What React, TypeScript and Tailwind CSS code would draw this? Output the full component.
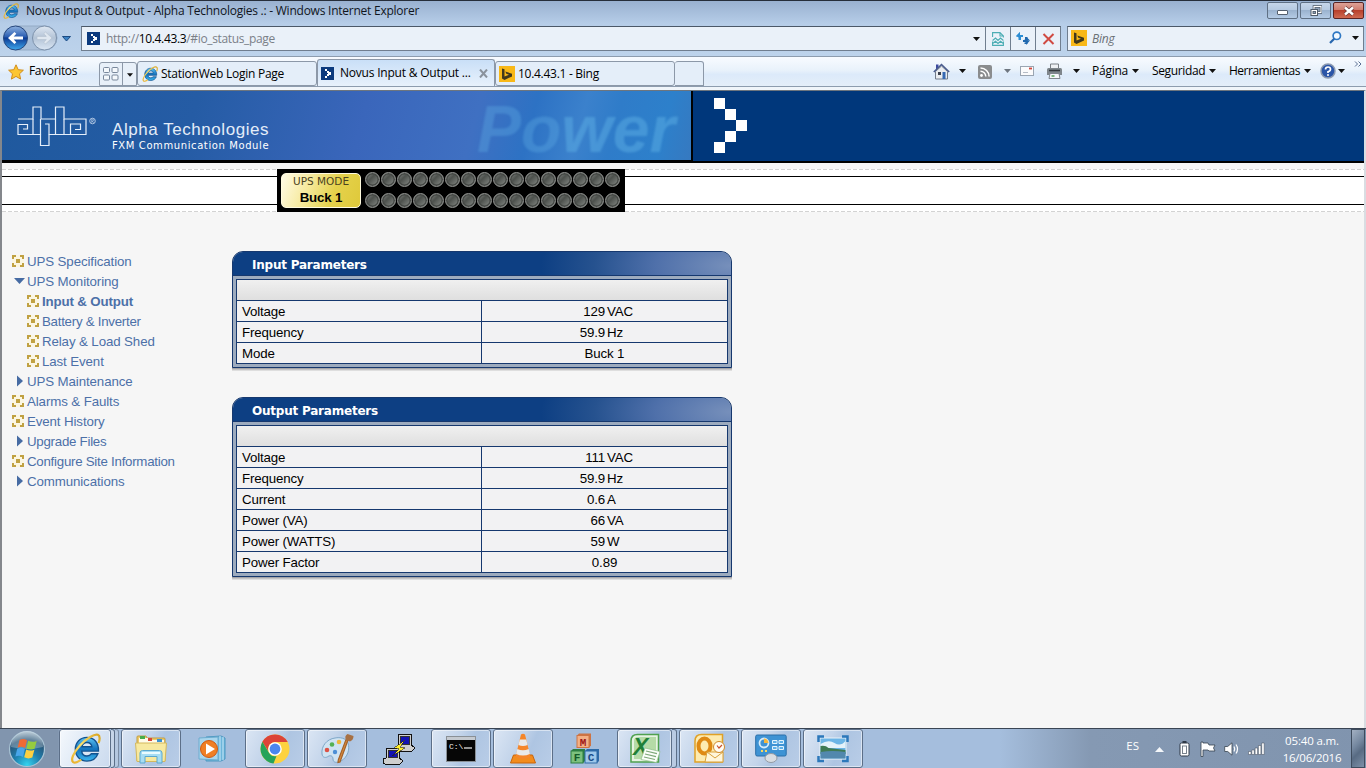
import type { ReactNode } from 'react';

const UI = "font-['Open_Sans','Noto_Sans',sans-serif]";

/* ---------- icons ---------- */

function IeIcon({ size }: { size: number }) {
  return (
    <svg width={size} height={size} viewBox="0 0 32 32" className="shrink-0">
      <defs>
        <linearGradient id="ieBlue" x1="0" y1="0" x2="0" y2="1">
          <stop offset="0" stopColor="#5ec4f4" />
          <stop offset="0.5" stopColor="#1473bd" />
          <stop offset="1" stopColor="#3cb5ee" />
        </linearGradient>
        <linearGradient id="ieGold" x1="1" y1="0" x2="0" y2="1">
          <stop offset="0" stopColor="#d9a520" />
          <stop offset="0.5" stopColor="#fbdf6e" />
          <stop offset="1" stopColor="#e8b02a" />
        </linearGradient>
      </defs>
      <path
        d="M17.5 4.5C10.5 4.5 5.5 9.8 5.5 16.8S10.5 29 17.5 29c5.4 0 9.6-3 11.3-7.6h-6.7c-1 1.5-2.6 2.3-4.6 2.3-3 0-5.2-2-5.4-5h17.3C29.9 10.500 25 4.500 17.500 4.500zM12.300 14.200c.5-2.600 2.500-4.400 5.200-4.400s4.700 1.800 5.100 4.400z"
        fill="url(#ieBlue)"
        stroke="#12528f"
        strokeWidth="1.4"
      />
      <path
        d="M29.500 10.500c1.600-4.600 1.300-7.700-.8-8.600C25.600.6 17 5.400 10 13.200 3.200 20.800.6 28 3.300 30c1.700 1.200 4.900 0 8.300-2.500"
        fill="none"
        stroke="url(#ieGold)"
        strokeWidth="2.300"
      />
    </svg>
  );
}

function NovusIcon() {
  return (
    <svg width="13" height="13" viewBox="0 0 13 13" className="shrink-0" shapeRendering="crispEdges">
      <rect width="13" height="13" fill="#0b3a7e" />
      <path d="M4 2h2v2H4zM6 4h2v2H6zM7 5h3v3H7zM6 7h2v2H6zM4 9h2v2H4z" fill="#fff" />
    </svg>
  );
}

function BingIcon({ className }: { className?: string }) {
  return (
    <svg width="16" height="16" viewBox="0 0 16 16" className={`shrink-0 ${className ?? ''}`}>
      <rect width="16" height="16" fill="#f8b818" />
      <path d="M3 2.500l2.500.8v7.200l4.500-1.800-2.700-1L6.300 5.500l6.700 2.300v2.600L5.500 14 3 12.500z" fill="#41391d" />
    </svg>
  );
}

function Caret({ color = '#111', className = '' }: { color?: string; className?: string }) {
  return (
    <svg width="7" height="4" viewBox="0 0 7 4" className={`shrink-0 ${className}`}>
      <path d="M0 0h7L3.500 4z" fill={color} />
    </svg>
  );
}

function NavNode() {
  return (
    <svg width="12" height="12" viewBox="0 0 12 12" className="shrink-0" shapeRendering="crispEdges">
      <rect width="12" height="12" fill="#fbf6e2" />
      <path
        d="M0 0h4v2H2v2H0zM8 0h4v4h-2V2H8zM0 8h2v2h2v2H0zM10 8h2v4H8v-2h2zM4 4h4v4H4z"
        fill="#c0a142"
      />
    </svg>
  );
}

/* ---------- browser chrome ---------- */

function TitleBar() {
  return (
    <div className="flex h-[26px] items-start border-t border-[#262e3a]">
      <div className="ml-[3px] mt-[2px]">
        <IeIcon size={16} />
      </div>
      <span className="ml-[7px] mt-[1px] text-[12px] leading-[18px] tracking-[-0.240px] text-[#10151c]">
        Novus Input &amp; Output - Alpha Technologies .: - Windows Internet Explorer
      </span>
      <div className="ml-auto mr-[2px] mt-[1px] flex gap-[2px]">
        <div className="flex h-[17px] w-[31px] items-center justify-center rounded-[2px] border border-[#5f7084] bg-[linear-gradient(#c6d6e9_0%,#b5c9e0_48%,#9bb3cf_50%,#b4cbe5_100%)]">
          <span className="mt-[3px] h-[5px] w-[11px] rounded-[1px] border border-[#55606e] bg-white" />
        </div>
        <div className="flex h-[17px] w-[31px] items-center justify-center rounded-[2px] border border-[#5f7084] bg-[linear-gradient(#c6d6e9_0%,#b5c9e0_48%,#9bb3cf_50%,#b4cbe5_100%)]">
          <svg width="13" height="12" viewBox="0 0 13 12" className="shrink-0">
            <rect x="5" y="1.500" width="7" height="6" fill="#8fa3bb" stroke="#4f5b69" strokeWidth="2.600" />
            <rect x="5" y="1.500" width="7" height="6" fill="none" stroke="#fff" strokeWidth="1.100" />
            <rect x="2" y="4.500" width="6.500" height="6" fill="#fff" stroke="#4f5b69" strokeWidth="1" />
            <rect x="4" y="6.500" width="2.500" height="2" fill="#8fa3bb" stroke="#4f5b69" strokeWidth="0.900" />
          </svg>
        </div>
        <div className="flex h-[17px] w-[31px] items-center justify-center rounded-[2px] border border-[#5b2424] bg-[linear-gradient(#dda297_0%,#cf7b6d_48%,#b8402c_50%,#cf6a52_100%)]">
          <svg width="12" height="10" viewBox="0 0 12 10">
            <path d="M2 1.500l8 7M10 1.500l-8 7" stroke="#6b3b3b" strokeWidth="4" />
            <path d="M2 1.500l8 7M10 1.500l-8 7" stroke="#fff" strokeWidth="2.400" />
          </svg>
        </div>
      </div>
    </div>
  );
}

function BackForward() {
  return (
    <svg width="74" height="28" viewBox="0 0 74 28" className="shrink-0">
      <defs>
        <linearGradient id="back" x1="0" y1="0" x2="0" y2="1">
          <stop offset="0" stopColor="#8fb2e0" />
          <stop offset="0.45" stopColor="#2a5db2" />
          <stop offset="0.5" stopColor="#0c3a94" />
          <stop offset="1" stopColor="#3fa9ee" />
        </linearGradient>
        <linearGradient id="fwd" x1="0" y1="0" x2="0" y2="1">
          <stop offset="0" stopColor="#dfe8f3" />
          <stop offset="0.5" stopColor="#b3c3d6" />
          <stop offset="1" stopColor="#dbe7f4" />
        </linearGradient>
      </defs>
      <path d="M15 2h30a12 12 0 0 1 0 24H15z" fill="#a9bfd9" stroke="#94abc6" />
      <circle cx="15.500" cy="14" r="12" fill="url(#back)" stroke="#27477c" />
      <path d="M8 14l6.500-6 1.800 1.800-2.600 2.600h9.300v3.200h-9.300l2.600 2.600-1.800 1.800z" fill="#fff" />
      <circle cx="44.500" cy="14" r="12" fill="url(#fwd)" stroke="#7c91ab" />
      <path d="M52 14l-6.500-6-1.800 1.800 2.600 2.600H37v3.200h9.300l-2.600 2.600 1.800 1.800z" fill="#dfe7f0" stroke="#b4c1d0" strokeWidth="0.700" />
      <path d="M62.500 12.500h8l-4 4.500z" fill="#3b82c4" stroke="#1c4b83" strokeWidth="1" />
    </svg>
  );
}

function AddressRow() {
  return (
    <div className="flex h-[30px] items-start">
      <div className="-mt-[2px]">
        <BackForward />
      </div>
      <div className="ml-[7px] flex h-[25px] w-[980px] border border-[#707e8f] border-t-[#4b5868] bg-[#eaf1f9]">
        <div className="ml-[5px] mt-[5px]">
          <NovusIcon />
        </div>
        <span className="ml-[6px] mt-[3px] text-[12px] leading-[18px] tracking-[-0.350px] text-[#7a8088]">
          http://<span className="text-black">10.4.43.3</span>/#io_status_page
        </span>
        <Caret className="ml-auto mr-[5px] mt-[10px]" />
        <div className="flex w-[25px] items-center justify-center border-l border-[#707e8f]">
          <svg width="12" height="14" viewBox="0 0 12 14" fill="none" stroke="#4badb4" strokeWidth="1.100">
            <path d="M.6 5V.6h7.400l3.400 3.400v1.500M.6 9.500v3.900h10.800V9.500M8 .6V4h3.400" />
            <path d="M.6 8.500L3.500 6l2.500 2.500L8.500 6l2.900 2.500M.6 11.500L3.500 9.300 6 11.500l2.500-2.200 2.900 2.200" />
          </svg>
        </div>
        <div className="flex w-[25px] items-center justify-center border-l border-[#707e8f]">
          <svg width="14" height="14" viewBox="0 0 14 14">
            <path d="M4 0v3h2.500v2H5v3H3V5.500L0 4z" fill="#2c8dd3" />
            <path d="M4 0L0 4.500h2.500V8H5V5h2V3H4z" fill="#2c8dd3" />
            <path d="M10 14l4-4.500h-2.500V6H9v3H7v2h3z" transform="translate(0 -1)" fill="#2068ae" />
            <path d="M8 8.500L10.500 5l3.500 3.500h-2.500V12H8.500v-1.500H9.500v-2z" fill="#2068ae" />
          </svg>
        </div>
        <div className="flex w-[25px] items-center justify-center border-l border-[#707e8f]">
          <svg width="13" height="12" viewBox="0 0 13 12">
            <path d="M1.500 1l10 10M11.500 1l-10 10" stroke="#d04a42" strokeWidth="2" />
          </svg>
        </div>
      </div>
      <div className="ml-[6px] flex h-[25px] w-[297px] border border-[#707e8f] border-t-[#4b5868] bg-[#eaf1f9]">
        <BingIcon className="ml-[3px] mt-[3px]" />
        <span className="ml-[5px] mt-[3px] text-[12px] italic leading-[18px] tracking-[-0.2px] text-[#6a7076]">Bing</span>
        <svg width="13" height="13" viewBox="0 0 13 13" className="ml-auto mr-[10px] mt-[4px]">
          <circle cx="7.800" cy="4.800" r="3.700" fill="#f3f9ff" stroke="#2f78c4" strokeWidth="1.700" />
          <path d="M5.200 7.800L1 12" stroke="#2766ae" strokeWidth="2.200" />
        </svg>
        <Caret className="mr-[4px] mt-[9px]" />
      </div>
    </div>
  );
}

function CommandBar() {
  return (
    <div className="flex h-[30px] items-start border-t border-[#8d9cae] bg-[linear-gradient(#f8fbff_0%,#e9f2fb_45%,#dceafa_60%,#e4eef9_100%)]">
      <svg width="16" height="16" viewBox="0 0 16 16" className="ml-[8px] mt-[7px] shrink-0">
        <path d="M8 .8l2.200 4.900 5.200.5-3.900 3.600 1.100 5.300L8 12.400l-4.600 2.700 1.100-5.300L.6 6.200l5.200-.5z" fill="#fcc633" stroke="#d18d1c" strokeWidth="1" />
      </svg>
      <span className="ml-[5px] mt-[5px] w-[70px] text-[12px] leading-[18px] tracking-[-0.350px]">Favoritos</span>
      <div className="mt-[5px] flex h-[24px] w-[38px] rounded-t-[3px] border border-[#8c98a8] bg-[#e8f0f9]">
        <div className="flex w-[23px] items-center justify-center border-r border-[#8c98a8]">
          <svg width="16" height="14" viewBox="0 0 16 14" fill="#f4f8fc" stroke="#78879b">
            <rect x=".5" y=".5" width="6" height="5" rx="1" />
            <rect x="9" y=".5" width="6" height="5" rx="1" />
            <rect x=".5" y="8" width="6" height="5" rx="1" />
            <rect x="9" y="8" width="6" height="5" rx="1" />
          </svg>
        </div>
        <Caret className="ml-[4px] mt-[10px] w-[6px]" />
      </div>
      <div className="mt-[4px] flex h-[25px] w-[180px] items-start rounded-[3px] border border-[#8c98a8] bg-[#e4eef9]">
        <div className="ml-[4px] mt-[4px]">
          <IeIcon size={16} />
        </div>
        <span className="ml-[3px] mt-[3px] text-[12px] leading-[18px] tracking-[-0.250px]">StationWeb Login Page</span>
      </div>
      <div className="mt-[2px] flex h-[28px] w-[178px] items-start rounded-t-[3px] border border-b-0 border-[#8c98a8] bg-[linear-gradient(#c9dff7,#e9f2fc)]">
        <div className="ml-[3px] mt-[7px]">
          <NovusIcon />
        </div>
        <span className="ml-[6px] mt-[4px] text-[12px] leading-[18px] tracking-[-0.210px]">Novus Input &amp; Output ...</span>
        <svg width="9" height="9" viewBox="0 0 9 9" className="ml-auto mr-[6px] mt-[9px]">
          <path d="M1 .5l7 8M8 .5l-7 8" stroke="#8a929c" strokeWidth="2" />
        </svg>
      </div>
      <div className="mt-[4px] flex h-[25px] w-[180px] items-start rounded-[3px] border border-[#8c98a8] bg-[#e4eef9]">
        <BingIcon className="ml-[3px] mt-[4px]" />
        <span className="ml-[3px] mt-[3px] text-[12px] leading-[18px] tracking-[-0.280px]">10.4.43.1 - Bing</span>
      </div>
      <div className="mt-[4px] h-[25px] w-[29px] rounded-t-[3px] border border-l-0 border-[#8c98a8] bg-[#e4eef9]" />
      <div className="ml-auto flex items-start text-[12px] leading-[18px]">
        <svg width="17" height="17" viewBox="0 0 17 17" className="mt-[6px]">
          <path d="M3 1.500h2.500V5L3 7z" fill="#3d4aa0" />
          <path d="M2.500 8.500L8.500 3l6 5.500V16h-12z" fill="#e9ecf0" stroke="#707b8a" />
          <path d="M.8 9L8.500 1.500 16.200 9" fill="none" stroke="#4a5c8e" strokeWidth="1.600" />
          <rect x="5" y="9" width="3" height="3" fill="#3a3f4c" />
          <rect x="9.500" y="9" width="3" height="7" fill="#3568b2" />
        </svg>
        <Caret className="ml-[9px] mt-[12px]" />
        <svg width="14" height="14" viewBox="0 0 14 14" className="ml-[12px] mt-[8px]">
          <rect width="14" height="14" rx="2" fill="#8a8c8e" />
          <circle cx="3.500" cy="10.500" r="1.400" fill="#fff" />
          <path d="M2.500 6.200a5.300 5.300 0 0 1 5.300 5.300M2.500 3a8.600 8.600 0 0 1 8.600 8.600" fill="none" stroke="#fff" strokeWidth="1.500" />
        </svg>
        <Caret color="#6e7680" className="ml-[12px] mt-[12px]" />
        <svg width="14" height="10" viewBox="0 0 14 10" className="ml-[9px] mt-[9px]">
          <rect x=".5" y=".5" width="13" height="9" fill="#fbfbfc" stroke="#9aa5b2" />
          <path d="M9 2.500h3" stroke="#d2473c" strokeWidth="1.800" />
          <path d="M3 6.500h5" stroke="#b5bcc6" />
        </svg>
        <svg width="17" height="16" viewBox="0 0 17 16" className="ml-[12px] mt-[6px]">
          <path d="M4.500 1h8v5h-8z" fill="#eef1f4" stroke="#7a8086" />
          <path d="M1 6.500q0-1.500 1.500-1.500h12q1.500 0 1.500 1.500V12H1z" fill="#7e858b" />
          <path d="M3 7.500h11" stroke="#33383c" strokeWidth="1.500" />
          <path d="M4 10.500h9l1 5H3z" fill="#f6f8fa" stroke="#7f868d" />
          <path d="M5.500 13h3" stroke="#57a35b" strokeWidth="1.500" />
        </svg>
        <Caret className="ml-[10px] mt-[12px]" />
        <span className="ml-[12px] mt-[5px] w-[36px] tracking-[-0.250px]">Página</span>
        <Caret className="ml-[4px] mt-[12px]" />
        <span className="ml-[13px] mt-[5px] w-[53px] tracking-[-0.350px]">Seguridad</span>
        <Caret className="ml-[4px] mt-[12px]" />
        <span className="ml-[13px] mt-[5px] w-[71px] tracking-[-0.500px]">Herramientas</span>
        <Caret className="ml-[4px] mt-[12px]" />
        <svg width="16" height="16" viewBox="0 0 16 16" className="ml-[9px] mt-[6px]">
          <circle cx="8" cy="8" r="7" fill="#2a55a8" stroke="#8b99b0" strokeWidth="1.500" />
          <path d="M5.500 6.500Q5.500 4 8 4t2.500 2.200Q10.500 8 8 8.700V10" fill="none" stroke="#fff" strokeWidth="1.700" />
          <circle cx="8" cy="12" r="1" fill="#fff" />
        </svg>
        <Caret className="ml-[2px] mt-[12px]" />
        <svg width="8" height="6" viewBox="0 0 8 6" className="ml-[9px] mr-[4px] mt-[4px]">
          <path d="M1 .5L3.500 3 1 5.500M4.500 .5L7 3 4.500 5.500" fill="none" stroke="#5a6e92" />
        </svg>
      </div>
    </div>
  );
}

/* ---------- page ---------- */

function Banner() {
  return (
    <div className="flex h-[72px] shrink-0 border-b-2 border-black bg-[#00377b]">
      <div className="relative h-[72px] w-[691px] border-b-[3px] border-r-2 border-black bg-[linear-gradient(105deg,#1f599e_0%,#255ca5_28%,#3a66bb_52%,#3f70c2_68%,#2d72c4_76%,#3b81cc_83%,#2f7cc9_88%,#2d80cb_95%,#3679c0_100%)]">
        <span className="absolute left-[475px] top-[8px] font-['Liberation_Sans',Arial,sans-serif] text-[66px] font-bold italic leading-[60px] text-[#62aee4]/35 blur-[0.800px]">
          Po<span className="text-[#62b4e6]/45">wer</span>
        </span>
        <div className="flex pl-[15px]">
          <svg width="80" height="44" viewBox="0 0 80 44" className="mt-[14px]" fill="none" stroke="#e6effa" strokeWidth="1.200">
            <path d="M1 14h15V2h8v12h14.500V2h8.500v12h22v15.500H32v11h-8.500v-11H1v-10h9.500v4.500H6" />
            <path d="M16 14v15.500M23.500 14v15.500M32 29.500V19h-4M38.500 14v15.500M47 14v15.500M53.500 29.500V19h10v5.500H58" />
            <circle cx="75.500" cy="16" r="2.800" strokeWidth="0.700" />
            <path d="M74.700 17.700v-3.300h1q1 0 1 .9t-1 .8h-.8l1.800 1.600" strokeWidth="0.500" />
          </svg>
          <div className="ml-[15px] mt-[29px] flex flex-col">
            <span className="font-['Liberation_Sans',Arial,sans-serif] text-[17px] leading-[19px] tracking-[0.550px] text-[#e4edf9]">
              Alpha Technologies
            </span>
            <span className="font-['DejaVu_Sans',Verdana,sans-serif] text-[10px] leading-[14px] tracking-[0.600px] text-white">
              FXM Communication Module
            </span>
          </div>
        </div>
      </div>
      <svg width="33" height="55" viewBox="0 0 33 55" className="ml-[21px] mt-[7px]" shapeRendering="crispEdges">
        <path d="M0 0h11v11H0zM11 11h11v11H11zM22 22h11v11H22zM11 33h11v11H11zM0 44h11v11H0z" fill="#fff" />
      </svg>
    </div>
  );
}

function Led() {
  return (
    <span className="block size-[15px] rounded-full border border-[#949693] bg-[linear-gradient(135deg,#8b8e8b_0%,#4c504c_40%,#5d615d_55%,#8b8f8b_100%)] shadow-[inset_0_0_0_1.500px_#454845]" />
  );
}

const leds = Array.from({ length: 16 }, (_, i) => i);

const dashes = 'h-px bg-[repeating-linear-gradient(90deg,#d3d3d3_0px,#d3d3d3_4px,transparent_4px,transparent_6px)]';

function StatusStrip() {
  return (
    <div className="mt-[6px] flex h-[43px] shrink-0">
      <StripLines className="w-[275px]" />
      <div className="flex w-[348px] bg-black pl-[4px] pt-[4px]">
        <div className="flex h-[35px] w-[80px] flex-col items-center rounded-[5px] border border-[#fffbe0] bg-[linear-gradient(110deg,#fffbe6_0%,#f6e99a_35%,#e5d24c_65%,#dfc93a_100%)]">
          <span className="mt-[1px] font-['DejaVu_Sans',Verdana,sans-serif] text-[10.500px] leading-[13px] text-[#4a4320]">
            UPS MODE
          </span>
          <span className="mt-[2px] font-['Liberation_Sans',Arial,sans-serif] text-[13.300px] font-bold leading-[16px] tracking-[-0.150px] text-black">
            Buck 1
          </span>
        </div>
        <div className="ml-[4px] -mt-px flex flex-col gap-[6px]">
          <div className="flex gap-px">{leds.map((i) => <Led key={i} />)}</div>
          <div className="flex gap-px">{leds.map((i) => <Led key={i} />)}</div>
        </div>
      </div>
      <StripLines className="flex-1" />
    </div>
  );
}

function StripLines({ className }: { className: string }) {
  return (
    <div className={`flex flex-col bg-white ${className}`}>
      <div className={dashes} />
      <div className="mt-[6px] h-[29px] border-y border-black" />
      <div className={`mt-[6px] ${dashes}`} />
    </div>
  );
}

type NavKind = 'node' | 'open' | 'closed';
const nav: { label: string; kind: NavKind; sub?: boolean; active?: boolean; tight?: boolean }[] = [
  { label: 'UPS Specification', kind: 'node' },
  { label: 'UPS Monitoring', kind: 'open' },
  { label: 'Input & Output', kind: 'node', sub: true, active: true },
  { label: 'Battery & Inverter', kind: 'node', sub: true, tight: true },
  { label: 'Relay & Load Shed', kind: 'node', sub: true },
  { label: 'Last Event', kind: 'node', sub: true },
  { label: 'UPS Maintenance', kind: 'closed' },
  { label: 'Alarms & Faults', kind: 'node' },
  { label: 'Event History', kind: 'node' },
  { label: 'Upgrade Files', kind: 'closed', tight: true },
  { label: 'Configure Site Information', kind: 'node', tight: true },
  { label: 'Communications', kind: 'closed' },
];

function NavMarker({ kind }: { kind: NavKind }) {
  if (kind === 'node') return <NavNode />;
  return (
    <svg width="12" height="12" viewBox="0 0 12 12" className="shrink-0 overflow-visible">
      <path d={kind === 'open' ? 'M2 3h11L7.500 9z' : 'M5 .500l6 5.500-6 5.500z'} fill="#466ba3" />
    </svg>
  );
}

function navTracking(n: (typeof nav)[number]) {
  if (n.active) return 'font-bold tracking-[-0.150px]';
  return n.tight ? 'tracking-[-0.260px]' : 'tracking-[-0.110px]';
}

function Sidebar() {
  return (
    <div className="flex w-[220px] flex-col">
      {nav.map((n) => (
        <div key={n.label} className={`flex h-5 items-center ${n.sub ? 'pl-[15px]' : ''}`}>
          <NavMarker kind={n.kind} />
          <span className={`ml-[3px] h-5 text-[13.300px] leading-[21px] text-[#4c70a8] ${navTracking(n)}`}>{n.label}</span>
        </div>
      ))}
    </div>
  );
}

type Row = [label: string, value: string, unit?: string];

function Panel({ title, rows }: { title: string; rows: Row[] }) {
  return (
    <section className="w-[500px] overflow-hidden rounded-t-[11px] border border-[#16386e] bg-[#9dabbe] shadow-[0_1px_0_#a5a5a8,0_2px_0_#c4c4c6,0_3px_0_#dedede]">
      <h2 className="h-[24px] border-b border-[#16386e] bg-[radial-gradient(ellipse_190px_75px_at_100%_60%,#7790bb_0%,#4f70aa_40%,#26528f_72%,#0d3f83_100%)] pl-[19px] font-['DejaVu_Sans',Verdana,sans-serif] text-[12px] font-bold leading-[26px] tracking-[-0.220px] text-white">
        {title}
      </h2>
      <div className="m-[3px] border border-b-0 border-[#16386e] bg-[#f2f2f3]">
        <div className="h-[21px] border-b border-[#16386e] bg-[linear-gradient(#f0f0f0,#dfdfdf)]" />
        {rows.map(([label, value, unit]) => (
          <div
            key={label}
            className="flex h-[21px] border-b border-[#16386e] text-[13.300px] leading-[21px] tracking-[-0.150px] text-black"
          >
            <span className="w-[245px] border-r border-[#16386e] pl-[5px]">{label}</span>
            {unit ? (
              <span className="flex flex-1">
                <span className="w-[123px] text-right">{value}</span>
                <span className="pl-[2px]">{unit}</span>
              </span>
            ) : (
              <span className="flex-1 text-center">{value}</span>
            )}
          </div>
        ))}
      </div>
    </section>
  );
}

/* ---------- taskbar ---------- */

function TaskButton({ children, className = '' }: { children: ReactNode; className?: string }) {
  return (
    <div
      className={`flex h-[39px] shrink-0 items-center justify-center rounded-[3px] border border-[#5c6f88] bg-[linear-gradient(115deg,#dbe6f4_0%,#c3d4ea_40%,#aec5e2_60%,#b9cde7_100%)] shadow-[inset_0_0_0_1px_rgba(255,255,255,0.500)] ${className}`}
    >
      {children}
    </div>
  );
}

function StartOrb() {
  return (
    <svg width="38" height="38" viewBox="0 0 38 38" className="ml-[8px] mt-px shrink-0">
      <defs>
        <radialGradient id="orb" cx="0.5" cy="0.95" r="0.95">
          <stop offset="0" stopColor="#35d3ee" />
          <stop offset="0.4" stopColor="#1e7fae" />
          <stop offset="0.75" stopColor="#2a5577" />
          <stop offset="1" stopColor="#a5bccb" />
        </radialGradient>
      </defs>
      <circle cx="19" cy="19" r="17.500" fill="url(#orb)" stroke="#a9c3d4" strokeWidth="1.200" />
      <path d="M3 17a16 16 0 0 1 32 0q-16 4-32 0z" fill="#fff" opacity="0.270" />
      <path d="M11.500 10q4-2 7.500.3l-1.900 7.700q-4-2.200-7.500-.3z" fill="#ef6a35" />
      <path d="M20.200 10.800q3.800 2 8.500.2l-2.100 7.700q-3.800 1.700-8.200-.3z" fill="#95cb3f" />
      <path d="M9.200 18.700q4-2 7.700.3l-2 7.900q-3.700-2.200-7.500-.3z" fill="#49a6ea" />
      <path d="M18.200 19.500q3.800 2 8.200.2l-2.100 7.900q-4 1.700-8.100-.3z" fill="#fcd042" />
    </svg>
  );
}

function ExplorerIcon() {
  return (
    <svg width="34" height="32" viewBox="0 0 34 32">
      <path d="M3 4q0-1 1-1h8l1 2h17q1 0 1 1v22H3z" fill="#eccb6a" stroke="#c19d42" />
      <path d="M5 5h9l2 2h14v3H5z" fill="#fffbe8" />
      <rect x="6" y="3" width="5" height="3" fill="#47ad4b" />
      <rect x="14" y="5" width="4" height="3" fill="#d74837" />
      <rect x="23" y="6" width="5" height="3" fill="#3c92d1" />
      <path d="M1.500 10h31l-1.500 18.500H3z" fill="#f7e9a0" stroke="#d4b95e" />
      <path d="M6 20q0-2.500 2.500-2.500h17q2.500 0 2.500 2.500v10h-5v-6.500H11V30H6z" fill="#a6ddf3" stroke="#5ba8cf" />
      <path d="M8 20h18" stroke="#e9fbff" strokeWidth="2" />
    </svg>
  );
}

function MediaIcon() {
  return (
    <svg width="30" height="28" viewBox="0 0 30 28">
      <path d="M8 2l15-1 4 2v21l-4 2H8z" fill="#6cb5da" stroke="#4d98c1" />
      <path d="M22 1v25M25 2v23" stroke="#cbeafa" />
      <path d="M1 3l19-1v23L1 24z" fill="#a9d6ed" stroke="#6caccf" />
      <circle cx="11" cy="14" r="8.500" fill="#ef7f25" stroke="#cf5a12" />
      <path d="M8 8.500v11l9-5.500z" fill="#fff" />
    </svg>
  );
}

function ChromeIcon() {
  return (
    <svg width="30" height="30" viewBox="0 0 30 30">
      <circle cx="15" cy="15" r="14.500" fill="#fdd23f" />
      <path d="M2.400 7.800A14.500 14.500 0 0 1 27.700 8H15a7 7 0 0 0-6.200 10z" fill="#dc4438" />
      <path d="M2.400 7.800L9 18.700A7 7 0 0 0 16.500 22L13.500 29.400A14.500 14.500 0 0 1 2.400 7.800z" fill="#25a35a" />
      <circle cx="15" cy="15" r="6.800" fill="#fff" />
      <circle cx="15" cy="15" r="5.400" fill="#4a86ee" />
    </svg>
  );
}

function PaintIcon() {
  return (
    <svg width="34" height="32" viewBox="0 0 34 32">
      <path d="M15 5C7 6 1 13 2 21c.5 4 4 4 6 2.500 2.500-1.700 5-.5 5 2.500 0 4 4 4 8 2C28 24 30 16 28 10c-2-5-8-6-13-5z" fill="#cfe3f2" stroke="#7ea7c8" />
      <circle cx="7" cy="17" r="2.300" fill="#dc5246" />
      <circle cx="12" cy="11.500" r="2.300" fill="#54b153" />
      <circle cx="19" cy="9" r="2.300" fill="#f0b83b" />
      <circle cx="15" cy="19" r="2.200" fill="#4c8fd6" />
      <path d="M28 7l-8 22-2 .5.300-2.500 7.500-20z" fill="#d98d3e" stroke="#a3622a" strokeWidth="1.200" />
      <path d="M26 7q-2-4 1.500-6l6 2q0 4-3.500 5.500z" fill="#a77145" />
    </svg>
  );
}

function PuttyIcon() {
  return (
    <svg width="32" height="32" viewBox="0 0 32 32" shapeRendering="crispEdges">
      <path d="M15 1h13v11l3 2v2l-2 2H15l-2-2v-3h2z" fill="#cfcfcf" stroke="#111" />
      <path d="M17 3h9v8h-9z" fill="#1212b4" stroke="#333" />
      <path d="M3 15h13v10l3 2v2l-2 2H2l-2-1v-4l3-1z" fill="#cfcfcf" stroke="#111" />
      <path d="M5 17h9v7H5z" fill="#1212b4" stroke="#333" />
      <path d="M22 7L11 15l5 1-7 7 13-8-5-1z" fill="#ffee2b" stroke="#222" strokeWidth="0.600" />
    </svg>
  );
}

function CmdIcon() {
  return (
    <svg width="30" height="26" viewBox="0 0 30 26">
      <rect x=".5" y=".5" width="29" height="25" fill="#060606" stroke="#8a9096" />
      <rect x="1" y="1" width="28" height="3" fill="#c5cad0" />
      <text x="3" y="12.500" fontSize="8" fontFamily="Liberation Mono, monospace" fill="#f2f2f2">
        C:\
      </text>
      <path d="M18 12h8" stroke="#f2f2f2" strokeWidth="1.200" />
    </svg>
  );
}

function VlcIcon() {
  return (
    <svg width="26" height="31" viewBox="0 0 26 31">
      <path d="M3.500 22h19l3 8H.5z" fill="#f28c1d" stroke="#c9650b" />
      <path d="M11 1.500q2-1.500 4 0L20.500 24q-7.500 4-15 0z" fill="#f5862a" />
      <path d="M9.800 6.500h6.400l1.400 5.500q-4.600 2-9.200 0zM7.300 16q5.700 2.500 11.400 0l1.200 5q-6.900 3-13.800 0z" fill="#e9e9e9" />
    </svg>
  );
}

function Block({ x, y, fill, edge, letter, ink }: { x: number; y: number; fill: string; edge: string; letter: string; ink: string }) {
  return (
    <g>
      <path d={`M${x} ${y + 2}l2-2h12v12l-2 2H${x}z`} fill={edge} />
      <rect x={x} y={y + 2} width="12" height="12" fill={fill} stroke={edge} />
      <text x={x + 6} y={y + 12} textAnchor="middle" fontSize="11" fontWeight="bold" fontFamily="Liberation Mono, monospace" fill={ink}>
        {letter}
      </text>
    </g>
  );
}

function MfcIcon() {
  return (
    <svg width="30" height="32" viewBox="0 0 30 32">
      <Block x={7} y={0.500} fill="#f3b086" edge="#cd7444" letter="M" ink="#a01818" />
      <Block x={1} y={16} fill="#7cc07d" edge="#2d7f42" letter="F" ink="#155a28" />
      <Block x={15} y={16} fill="#9fc8ea" edge="#2e6ba8" letter="C" ink="#174a87" />
    </svg>
  );
}

function ExcelIcon() {
  return (
    <svg width="32" height="31" viewBox="0 0 32 31">
      <path d="M2 8q0-6.500 6.500-6.500h21V29H2z" fill="#e6f3e2" stroke="#4fa14f" strokeWidth="1.500" />
      <path d="M5 8q0-4 4-4h18v22H5z" fill="#b5dba7" />
      <text x="4" y="22" fontSize="23" fontWeight="bold" fontStyle="italic" fontFamily="Liberation Sans, sans-serif" fill="#1f8038">
        X
      </text>
      <path d="M16 15l15 3.500-3.500 11L12 26.500z" fill="#fbfefa" stroke="#8dbd86" strokeWidth="0.700" />
      <path d="M17 18l11 2.700M16 21l11 2.700M15 24l11 2.500" stroke="#7fa87a" strokeWidth="1.200" />
    </svg>
  );
}

function OutlookIcon() {
  return (
    <svg width="32" height="31" viewBox="0 0 32 31">
      <path d="M2 8q0-6.500 6.500-6.500h21V29H2z" fill="#fdebb0" stroke="#e0a126" strokeWidth="1.500" />
      <ellipse cx="11.500" cy="13" rx="6" ry="7.500" fill="none" stroke="#df8a14" strokeWidth="4" />
      <path d="M14 19h16v10H12z" fill="#fff6da" stroke="#d9a13a" />
      <path d="M14 19l8 6 8-6" fill="none" stroke="#d9a13a" />
      <circle cx="26" cy="14" r="5.500" fill="#fffdf4" stroke="#d08a2a" />
      <path d="M24 12.500l2 2.500 3-3" fill="none" stroke="#c8502c" strokeWidth="1.200" />
    </svg>
  );
}

function ControlPanelIcon() {
  return (
    <svg width="32" height="29" viewBox="0 0 32 29">
      <rect x=".7" y="1" width="30.500" height="21" rx="1.500" fill="#3e93d4" stroke="#2a6ea8" />
      <circle cx="9" cy="9" r="4.500" fill="none" stroke="#d6ecfa" strokeWidth="1.800" />
      <path d="M9 9V4.500A4.500 4.500 0 0 1 13.500 9z" fill="#f5b63c" />
      <path d="M17.500 6.500h4.500v3h-4.500zM24 6.500h4.500v3H24zM17.500 12.500h4.500v3h-4.500zM24 12.500h4.500v3H24z" fill="#5fb1e8" stroke="#e2f3fd" />
      <path d="M6 17h2M10 17h2" stroke="#f7d860" strokeWidth="2" />
      <ellipse cx="16" cy="24" rx="6" ry="4.500" fill="#d9dde2" stroke="#939aa3" />
    </svg>
  );
}

function SnipIcon() {
  return (
    <svg width="32" height="28" viewBox="0 0 32 28">
      <rect x="3" y="3" width="26" height="21" fill="#6db5e6" stroke="#e9f2f8" />
      <path d="M3.500 9q8-5 14-1t11-2v7h-25z" fill="#e5f2fa" />
      <path d="M3.500 11q5-1 8 2l17 2v4h-25z" fill="#3f7a54" />
      <path d="M3.500 17q12-2 25 0v6.500h-25z" fill="#5288ad" />
      <path d="M1.500 7V1.500H7M25 1.500h5.500V7M30.500 21v5H25M7 26H1.500v-5" fill="none" stroke="#2c78bb" strokeWidth="2.500" />
    </svg>
  );
}

function Taskbar() {
  return (
    <div className="flex h-[40px] shrink-0 items-start border-t border-[#3a4554] bg-[linear-gradient(90deg,#8195ae_0px,#8195ae_58px,#a5bedd_62px,#a5bedd_1000px,#8599b3_1090px,#8094ae_100%)]">
      <StartOrb />
      <TaskButton className="ml-[13px] w-[52px] bg-[linear-gradient(115deg,#f4f8fc_0%,#dde8f5_50%,#cbdaee_100%)]">
        <IeIcon size={31} />
      </TaskButton>
      <div className="flex h-[39px] w-[8px]">
        <div className="w-[4px] rounded-r-[3px] border border-l-0 border-[#5c6f88] bg-[#c6d5e8]" />
        <div className="w-[4px] rounded-r-[3px] border border-l-0 border-[#7c8ea6] bg-[#b5c8e0]" />
      </div>
      <TaskButton className="ml-[2px] w-[60px]"><ExplorerIcon /></TaskButton>
      <div className="flex h-[39px] w-[64px] items-center justify-center"><MediaIcon /></div>
      <TaskButton className="w-[60px]"><ChromeIcon /></TaskButton>
      <TaskButton className="ml-[2px] w-[60px]"><PaintIcon /></TaskButton>
      <div className="flex h-[39px] w-[64px] items-center justify-center"><PuttyIcon /></div>
      <TaskButton className="w-[60px]"><CmdIcon /></TaskButton>
      <TaskButton className="ml-[2px] w-[60px]"><VlcIcon /></TaskButton>
      <div className="flex h-[39px] w-[64px] items-center justify-center"><MfcIcon /></div>
      <TaskButton className="w-[55px]"><ExcelIcon /></TaskButton>
      <div className="h-[39px] w-[5px] rounded-r-[3px] border border-l-0 border-[#5c6f88] bg-[#b9cbe3]" />
      <TaskButton className="ml-[2px] w-[60px]"><OutlookIcon /></TaskButton>
      <TaskButton className="ml-[2px] w-[60px]"><ControlPanelIcon /></TaskButton>
      <TaskButton className="ml-[2px] w-[60px]"><SnipIcon /></TaskButton>
      <div className="ml-auto flex items-start text-white">
        <span className="mt-[8px] text-[11.500px] leading-[18px]">ES</span>
        <svg width="9" height="5" viewBox="0 0 9 5" className="ml-[16px] mt-[18px]">
          <path d="M0 5h9L4.500 0z" fill="#f4f7fa" />
        </svg>
        <svg width="11" height="16" viewBox="0 0 11 16" className="ml-[15px] mt-[12px]">
          <path d="M3.500 1h4" stroke="#2e3946" strokeWidth="2" />
          <rect x="1" y="2" width="9" height="13" rx="1.500" fill="#fff" stroke="#2e3946" />
          <rect x="3.500" y="5" width="4" height="7.500" fill="#fff" stroke="#69747f" strokeWidth="0.900" />
        </svg>
        <svg width="16" height="16" viewBox="0 0 16 16" className="ml-[10px] mt-[12px]">
          <path d="M1 1h2v1h5l1 2h6l-1.500 3 1.500 3H9L8 9H3v6.500H1z" fill="#fff" stroke="#36414e" strokeWidth="0.800" />
        </svg>
        <svg width="16" height="14" viewBox="0 0 16 14" className="ml-[8px] mt-[13px]">
          <path d="M.7 4.500h3L8 .8v12.400L3.700 9.500h-3z" fill="#fff" stroke="#36414e" strokeWidth="0.800" />
          <path d="M10 4.500q1.500 2.500 0 5M12 2.500q3 4.500 0 9" fill="none" stroke="#fff" strokeWidth="1.200" />
        </svg>
        <svg width="17" height="13" viewBox="0 0 17 13" className="ml-[8px] mt-[13px]">
          <path d="M.5 9.500h2.500v3H.5zM3.800 8h2.500v4.500H3.800zM7.100 6h2.500v6.500H7.100zM10.400 3.500h2.500v9h-2.500zM13.700 1h2.500v11.500h-2.500z" fill="#fff" stroke="#3c4754" strokeWidth="0.500" />
        </svg>
        <div className="ml-[17px] mt-[3px] flex w-[60px] flex-col items-center text-[11.500px] leading-[17px]">
          <span className="tracking-[-0.150px]">05:40 a.m.</span>
          <span className="tracking-[-0.250px]">16/06/2016</span>
        </div>
        <div className="ml-[9px] mr-px h-[39px] w-[14px] border border-[#3e4c5e] bg-[linear-gradient(135deg,#a3b1c3_0%,#74879f_40%,#586b83_60%,#7d90a8_100%)]" />
      </div>
    </div>
  );
}

export default function App() {
  return (
    <div className={`flex h-[768px] w-[1366px] flex-col overflow-hidden whitespace-nowrap text-black ${UI}`}>
      <div className="shrink-0 bg-[linear-gradient(#98b0cf_0px,#b6cde8_24px,#bdd3eb_56px)]">
        <TitleBar />
        <AddressRow />
        <CommandBar />
      </div>
      <div className="h-[4px] shrink-0 border-t border-[#8d9cae] bg-[#f0f5fa]" />
      <main className="flex min-h-0 flex-1 flex-col border-l-2 border-r-2 border-t border-l-[#84878c] border-r-[#d9dde2] border-t-[#6d757e] bg-[#f6f6f6] font-['Liberation_Sans',Arial,sans-serif]">
        <Banner />
        <StatusStrip />
        <div className="flex pl-[10px] pt-[39px]">
          <Sidebar />
          <div className="flex flex-col gap-[29px]">
            <Panel
              title="Input Parameters"
              rows={[
                ['Voltage', '129', 'VAC'],
                ['Frequency', '59.9', 'Hz'],
                ['Mode', 'Buck 1'],
              ]}
            />
            <Panel
              title="Output Parameters"
              rows={[
                ['Voltage', '111', 'VAC'],
                ['Frequency', '59.9', 'Hz'],
                ['Current', '0.6', 'A'],
                ['Power (VA)', '66', 'VA'],
                ['Power (WATTS)', '59', 'W'],
                ['Power Factor', '0.89'],
              ]}
            />
          </div>
        </div>
      </main>
      <Taskbar />
    </div>
  );
}
